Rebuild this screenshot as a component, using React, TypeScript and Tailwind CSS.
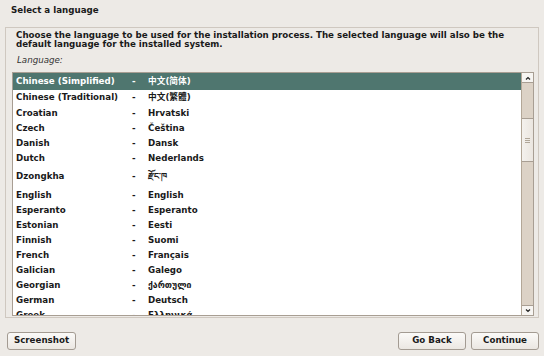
const languages: { name: string; native: string; h: string }[] = [
  { name: 'Chinese (Simplified)', native: '中文(简体)', h: 'h-[17px]' },
  { name: 'Chinese (Traditional)', native: '中文(繁體)', h: 'h-[16px]' },
  { name: 'Croatian', native: 'Hrvatski', h: 'h-[15px]' },
  { name: 'Czech', native: 'Čeština', h: 'h-[15px]' },
  { name: 'Danish', native: 'Dansk', h: 'h-[15px]' },
  { name: 'Dutch', native: 'Nederlands', h: 'h-[15px]' },
  { name: 'Dzongkha', native: 'རྫོང་ཁ', h: 'h-[22px]' },
  { name: 'English', native: 'English', h: 'h-[15px]' },
  { name: 'Esperanto', native: 'Esperanto', h: 'h-[15px]' },
  { name: 'Estonian', native: 'Eesti', h: 'h-[15px]' },
  { name: 'Finnish', native: 'Suomi', h: 'h-[15px]' },
  { name: 'French', native: 'Français', h: 'h-[15px]' },
  { name: 'Galician', native: 'Galego', h: 'h-[15px]' },
  { name: 'Georgian', native: 'ქართული', h: 'h-[15px]' },
  { name: 'German', native: 'Deutsch', h: 'h-[15px]' },
  { name: 'Greek', native: 'Ελληνικά', h: 'h-[15px]' },
]

function Button({ label, className }: { label: string; className: string }) {
  return (
    <button
      className={[
        'h-[18px] rounded-[3px] border border-[#a39b92] bg-gradient-to-b from-[#fbfaf8] to-[#ebe7e2] text-[8.7px] font-bold text-[#1a1a1a]',
        className,
      ].join(' ')}
    >
      {label}
    </button>
  )
}

export default function App() {
  return (
    <div
      className="w-[544px] h-[356px] bg-[#edeae6] flex flex-col overflow-hidden text-[#1a1a1a]"
      style={{ fontFamily: '"DejaVu Sans", "Noto Sans CJK SC", sans-serif' }}
    >
      <div className="h-[27px] pl-[11px] pt-[4px] text-[8.7px] font-bold leading-[12px]">Select a language</div>

      <div className="mx-[5px] h-[291px] border border-[#cfc8c0] flex flex-col">
        <p className="pl-[10px] pt-[3px] text-[8.7px] font-bold leading-[9px]">
          Choose the language to be used for the installation process. The selected language will also be the
          <br />
          default language for the installed system.
        </p>
        <div className="pl-[11px] pt-[5px] h-[23px] text-[8.7px] italic text-[#333]">Language:</div>

        <div className="ml-[6px] mr-[4px] h-[244px] border border-[#a89e93] bg-white flex">
          <div className="flex-1 overflow-hidden">
            {languages.map((l, i) => (
              <div
                key={l.name}
                className={[
                  'flex items-center text-[8.7px] font-bold',
                  l.h,
                  i === 0 ? 'bg-[#4f766f] text-white' : '',
                ].join(' ')}
              >
                <span className="w-[119px] pl-[3px] whitespace-nowrap">{l.name}</span>
                <span className="w-[16px]">-</span>
                <span className="whitespace-nowrap">{l.native}</span>
              </div>
            ))}
          </div>

          <div className="w-[12px] bg-[#dcd2c6] border-l border-[#b3a797] flex flex-col">
            <div className="h-[10px] bg-[#f7f5f2] border-b border-[#a89e93] flex items-center justify-center">
              <svg width="6" height="4" viewBox="0 0 6 4">
                <polyline points="1 3.5 3 1.5 5 3.5" fill="none" stroke="#222" strokeWidth="1.2" />
              </svg>
            </div>
            <div className="h-[35px]" />
            <div className="h-[44px] bg-gradient-to-r from-[#f4f1ed] to-[#ebe6e0] border-y border-[#a89e93] flex flex-col items-center justify-center gap-[1px]">
              <div className="w-[5px] h-px bg-[#b0a698]" />
              <div className="w-[5px] h-px bg-[#b0a698]" />
              <div className="w-[5px] h-px bg-[#b0a698]" />
            </div>
            <div className="flex-1" />
            <div className="h-[10px] bg-[#f7f5f2] border-t border-[#a89e93] flex items-center justify-center">
              <svg width="6" height="4" viewBox="0 0 6 4">
                <polyline points="1 0.5 3 2.5 5 0.5" fill="none" stroke="#222" strokeWidth="1.2" />
              </svg>
            </div>
          </div>
        </div>
      </div>

      <div className="flex items-center pt-[14px] px-[7px] pr-[5px]">
        <Button label="Screenshot" className="w-[69px]" />
        <div className="flex-1" />
        <Button label="Go Back" className="w-[68px]" />
        <Button label="Continue" className="w-[68px] ml-[5px]" />
      </div>
    </div>
  )
}
